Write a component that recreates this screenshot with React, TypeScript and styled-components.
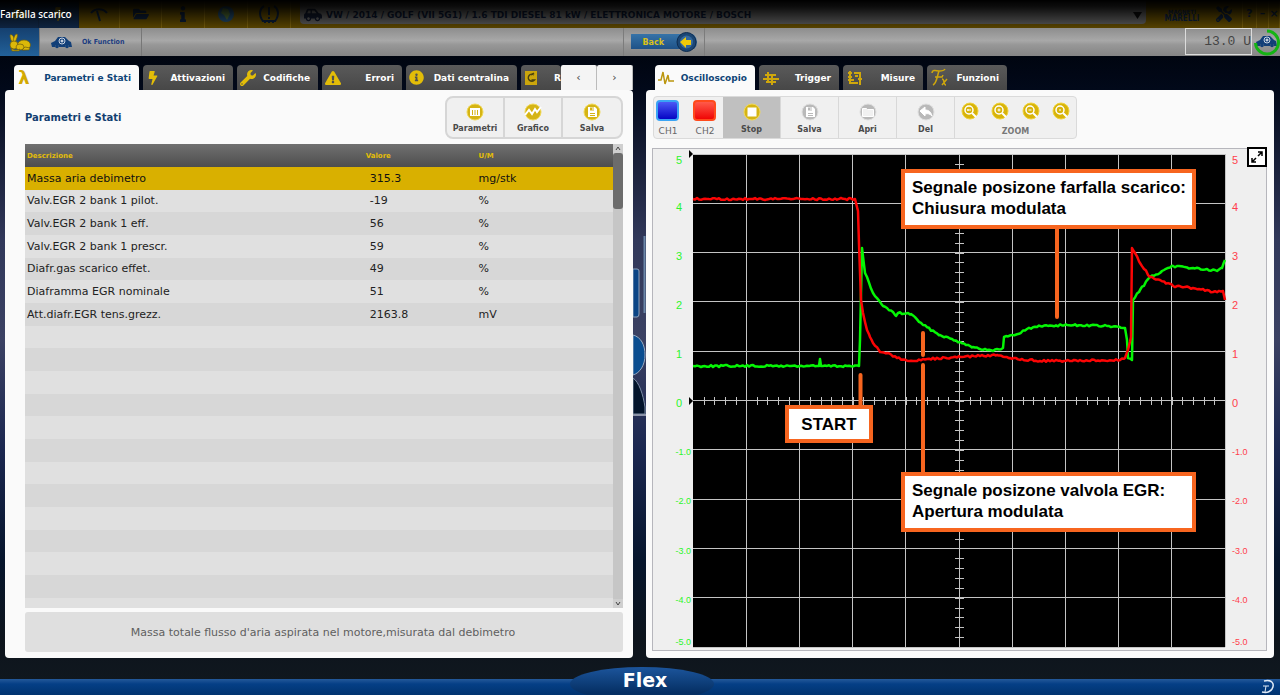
import React from "react";
import styled, { createGlobalStyle } from "styled-components";
import {
  FaBolt,
  FaWrench,
  FaExclamationTriangle,
  FaInfoCircle,
  FaFolderOpen,
  FaInfo,
  FaTools,
  FaCarSide,
} from "react-icons/fa";

const UI = '"DejaVu Sans", Verdana, sans-serif';
const UI_NARROW = '"DejaVu Sans Condensed", "DejaVu Sans", sans-serif';
const PLAIN = '"Liberation Sans", Arial, sans-serif';
const GOLD = "#e3bd08";
const NAVY = "#0f4577";

const GlobalStyle = createGlobalStyle`
  * { box-sizing: border-box; }
  body {
    margin: 0;
    font-family: ${UI};
    background: #020b1c;
  }
  button, select { font-family: inherit; margin: 0; }
  h1, h2, p { margin: 0; }
`;

const Page = styled.div`
  min-height: 100vh;
  display: flex;
  flex-direction: column;
  overflow: hidden;
  background: linear-gradient(180deg, #000510 56px, #02091a 90px, #31385a 240px, #3b4163 340px, #1b2750 450px, #06152c 560px, #0d141c 640px, #111920 100%);
`;

/* ---------- top bar ---------- */

const TopBar = styled.header`
  position: relative;
  display: flex;
  height: 28px;
  background: #8a6a00;
`;

const TopShade = styled.div`
  position: absolute;
  inset: 0;
  pointer-events: none;
  background: linear-gradient(180deg, #000 0, rgba(0, 0, 0, 0.9) 7px, rgba(0, 0, 0, 0.38) 100%);
`;

const WindowTitle = styled.h1`
  position: absolute;
  left: 0;
  top: 7px;
  font: 500 10px/14px "Noto Sans", sans-serif;
  color: #fff;
`;

const TopButton = styled.button<{ $width: number; $blue?: boolean }>`
  width: ${(p) => p.$width}px;
  flex: none;
  display: flex;
  align-items: center;
  justify-content: center;
  padding: 0;
  border: 0;
  border-right: 1px solid ${(p) => (p.$blue ? "#17335a" : "#b08a10")};
  background: ${(p) => (p.$blue ? "#173a68" : "transparent")};
  color: #10294d;
  font: 700 11px/14px ${UI};
`;

const Vehicle = styled.label`
  flex: 1;
  display: flex;
  align-items: center;
  gap: 4px;
  height: 24px;
  margin: 0 12px 0 9px;
  padding: 6px 4px 0 4px;
  border-radius: 0 0 4px 4px;
  background: #858585;
  color: #15203a;
`;

const VehicleSelect = styled.select`
  flex: 1;
  min-width: 0;
  height: 16px;
  padding: 0;
  border: 0;
  appearance: none;
  background: transparent;
  color: #0d1c3c;
  font-size: 9px;
  font-weight: 700;
`;

const Brand = styled.div`
  width: 48px;
  display: flex;
  flex-direction: column;
  align-items: center;
  justify-content: center;
  padding-top: 3px;
  color: #12305c;
  font: 700 8px/8px ${UI_NARROW};
`;

const BrandSmall = styled.span`
  font-size: 6px;
  line-height: 6px;
`;

/* ---------- function bar ---------- */

const FunctionBar = styled.nav`
  display: flex;
  height: 28px;
  background: linear-gradient(180deg, #8d8d8d, #a8a8a8 45%, #979797 60%, #858585);
`;

const RabbitButton = styled.button`
  width: 39px;
  padding: 4px 0 0;
  border: 0;
  background: linear-gradient(180deg, #15406f, #22619a);
`;

const OkFunction = styled.button`
  width: 103px;
  display: flex;
  align-items: center;
  gap: 10px;
  padding: 0 0 0 11px;
  border: 0;
  border-left: 1px solid #777;
  border-right: 1px solid #777;
  background: transparent;
  color: #1c3c80;
  font: 700 7px/12px ${UI_NARROW};
`;

const BarCenter = styled.div`
  flex: 1;
  display: flex;
  justify-content: center;
`;

const BackSlot = styled.div`
  width: 82px;
  padding: 4px 7px;
  border-left: 1px solid #7c7c7c;
  border-right: 1px solid #7c7c7c;
`;

const BackButton = styled.button`
  display: flex;
  align-items: center;
  justify-content: space-between;
  width: 66px;
  height: 20px;
  padding: 0 0 0 12px;
  border: 0;
  border-radius: 3px 10px 10px 3px;
  background: linear-gradient(180deg, transparent 2px, #3673a8 2px, #1f5288 17px, transparent 17px);
  color: #d9c119;
  font-size: 8px;
  font-weight: 700;
`;

const Lcd = styled.output`
  width: 67px;
  height: 27px;
  display: flex;
  align-items: center;
  justify-content: flex-end;
  border: 1px solid #dcdcdc;
  color: #444;
  font: 13px/20px "Liberation Mono", monospace;
  white-space: pre;
  overflow: hidden;
`;

const StatusSlot = styled.div`
  width: 28px;
  padding-left: 1px;
`;

/* ---------- panels and tabs ---------- */

const Main = styled.main`
  position: relative;
  flex: 1;
  display: grid;
  grid-template-columns: minmax(0, 1fr) minmax(0, 1fr);
  gap: 13px;
  padding: 9px 6px 21px 5px;
`;

const Column = styled.section`
  min-width: 0;
  display: flex;
  flex-direction: column;
`;

const TabRow = styled.div`
  display: flex;
  height: 25px;
  padding-left: 9px;
`;

const TabList = styled.div`
  flex: 1;
  min-width: 0;
  display: flex;
  gap: 4px;
  overflow: hidden;
`;

const Tab = styled.button<{ $width: number; $active?: boolean; $flush?: boolean }>`
  flex: none;
  width: ${(p) => p.$width}px;
  display: flex;
  align-items: center;
  justify-content: space-between;
  padding: 0 ${(p) => (p.$flush ? 0 : 8)}px 0 3px;
  border: 0;
  border-radius: 4px 4px 0 0;
  background: ${(p) => (p.$active ? "#fafafa" : "linear-gradient(180deg, #5a5a5a, #474747)")};
  color: ${(p) => (p.$active ? NAVY : "#fff")};
  font-size: 9px;
  font-weight: 700;
  white-space: nowrap;
  svg { flex: none; color: ${GOLD}; }
`;

const Lambda = styled.span`
  width: 14px;
  color: #d3a900;
  font: 700 18px/20px ${UI};
`;

const TabScroll = styled.button`
  width: 36px;
  padding: 0;
  border: 0;
  border-right: 1px solid #bbb;
  border-radius: 2px 2px 0 0;
  background: #f4f4f4;
  color: #444;
  font-size: 11px;
`;

const Panel = styled.div<{ $chart?: boolean }>`
  flex: 1;
  min-height: 568px;
  display: flex;
  flex-direction: column;
  padding: ${(p) => (p.$chart ? "6px 7px 7px 6px" : "6px 10px 6px 20px")};
  border-radius: 4px;
  background: #fafafa;
`;

/* ---------- left panel ---------- */

const PanelHead = styled.div`
  display: flex;
  justify-content: space-between;
  height: 48px;
`;

const PanelTitle = styled.h2`
  color: #123e70;
  font-size: 10px;
  line-height: 43px;
`;

const ButtonGroup = styled.div`
  display: flex;
  height: 43px;
  border: 2px solid #d6d6d6;
  border-radius: 8px;
  background: #f0f0f0;
  overflow: hidden;
`;

const ToolButton = styled.button<{ $active?: boolean; $faint?: boolean }>`
  width: 58px;
  display: flex;
  flex-direction: column;
  align-items: center;
  justify-content: center;
  gap: ${(p) => (p.$faint ? 4 : 3)}px;
  padding: 2px 0 0;
  border: 0;
  border-right: ${(p) => (p.$faint ? "1px solid #d8d8d8" : "2px solid #d6d6d6")};
  background: ${(p) => (p.$active ? "#c0c0c0" : "transparent")};
  color: #4a4a4a;
  font-size: 8px;
  line-height: 10px;
  font-weight: 700;
  &:last-child { border-right: 0; }
`;

const TableBox = styled.div`
  flex: 1 1 0;
  min-height: 0;
  display: flex;
  overflow: hidden;
`;

const TableClip = styled.div`
  flex: 1;
  min-height: 100%;
  overflow: hidden;
`;

const Table = styled.table`
  width: 100%;
  table-layout: fixed;
  border-collapse: collapse;
  color: #222;
  font-size: 11px;
  line-height: 14px;
  text-align: left;
  th, td { padding: 0 0 0 2px; font-weight: 400; }
`;

const HeadRow = styled.tr`
  height: 23px;
  background: linear-gradient(180deg, #707070, #4e4e4e);
  th {
    color: ${GOLD};
    font: 700 7px/12px ${UI};
  }
`;

const Row = styled.tr<{ $selected?: boolean }>`
  height: 23px;
  background: #d7d7d7;
  &:nth-child(3n + 2) { height: 22px; }
  &:nth-child(even) { background: #e0e0e0; }
  &:first-child { background: ${(p) => (p.$selected ? "#d9b000" : "#d7d7d7")}; color: #111; }
`;

const ValueCell = styled.td`
  && { padding-left: 6px; }
`;

const Scrollbar = styled.div`
  width: 10px;
  display: flex;
  flex-direction: column;
  align-items: center;
  background: #c6c6c6;
  color: #444;
`;

const ScrollStep = styled.button`
  width: 10px;
  height: 9px;
  padding: 0;
  border: 0;
  display: flex;
  background: #cfcfcf;
`;

const Thumb = styled.div`
  width: 10px;
  height: 56px;
  margin-bottom: auto;
  border-radius: 3px;
  background: #6c6c6c;
`;

const Description = styled.p`
  height: 40px;
  margin-top: 4px;
  padding-right: 2px;
  border-radius: 3px;
  background: #dfdfdf;
  color: #606060;
  font-size: 11px;
  line-height: 41px;
  text-align: center;
`;

/* ---------- oscilloscope ---------- */

const ScopeTools = styled.div`
  display: flex;
  align-self: flex-start;
  height: 43px;
  margin: 0 0 9px 1px;
  border: 1px solid #dadada;
  border-radius: 4px;
  background: #f0f0f0;
  overflow: hidden;
`;

const Channels = styled.div`
  display: flex;
  gap: 13px;
  width: 69px;
  padding-left: 2px;
`;

const Channel = styled.button`
  width: 24px;
  padding: 2px 0 0;
  border: 0;
  background: transparent;
  color: #666;
  font-size: 9px;
  line-height: 14px;
`;

const Led = styled.span<{ $glow: string; $from: string; $to: string }>`
  display: block;
  width: 23px;
  height: 21px;
  margin-bottom: 3px;
  border: 2px solid ${(p) => p.$glow};
  border-radius: 4px;
  background: linear-gradient(180deg, ${(p) => p.$from}, ${(p) => p.$to});
`;

const ZoomGroup = styled.div`
  width: 121px;
  padding-top: 5px;
  color: #777;
  font-size: 8px;
  line-height: 12px;
  font-weight: 700;
  text-align: center;
`;

const ZoomRow = styled.div`
  display: flex;
  justify-content: space-between;
  margin: 0 6px 4px;
`;

const ZoomButton = styled.button`
  width: 18px;
  height: 20px;
  padding: 0;
  border: 0;
  background: transparent;
`;

const ScopeFrame = styled.div`
  position: relative;
  flex: 1;
  display: flex;
  padding: 5px 0 3px;
  border: 1px solid #b6b6bc;
  background: #efefef;
`;

const Axis = styled.div<{ $right?: boolean }>`
  width: ${(p) => (p.$right ? 41 : 40)}px;
  display: flex;
  flex-direction: column;
  padding: ${(p) => (p.$right ? "0 0 0 7px" : "0 2px 0 0")};
  color: ${(p) => (p.$right ? "#ff3e4c" : "#2cf52c")};
  font-family: ${PLAIN};
`;

const AxisLabel = styled.span<{ $small?: boolean; $left?: boolean }>`
  flex: 1;
  display: flex;
  align-items: center;
  justify-content: ${(p) => (p.$left ? "flex-end" : "flex-start")};
  padding-right: ${(p) => (p.$left && !p.$small ? 9 : 0)}px;
  font-size: ${(p) => (p.$small ? 9 : 11)}px;
  line-height: ${(p) => (p.$small ? 9 : 12)}px;
  &:first-child { flex: none; height: 28px; align-items: flex-start; }
  &:last-child { flex: none; height: 22px; align-items: flex-end; }
`;

const Plot = styled.div`
  position: relative;
  flex: 1;
  min-width: 0;
  background: #000;
`;

const PlotSvg = styled.svg`
  position: absolute;
  inset: 0;
  width: 100%;
  height: 100%;
  overflow: visible;
`;

const Callout = styled.div<{ $left: number; $top: number; $small?: boolean }>`
  position: absolute;
  left: ${(p) => p.$left}%;
  top: ${(p) => p.$top}%;
  width: ${(p) => (p.$small ? 88 : 295)}px;
  height: ${(p) => (p.$small ? 38 : 60)}px;
  padding: ${(p) => (p.$small ? "5px 0" : "4px 7px")};
  border: 4px solid #f7651f;
  background: #fff;
  color: #000;
  font: 700 17px/21px ${PLAIN};
  text-align: ${(p) => (p.$small ? "center" : "left")};
  white-space: nowrap;
`;

const ExpandButton = styled.button`
  position: absolute;
  top: -2px;
  right: -1px;
  width: 20px;
  height: 20px;
  padding: 0;
  display: flex;
  border: 2px solid #000;
  background: #fff;
`;

const Gutter = styled.svg`
  position: absolute;
  left: calc(50% - 7px);
  top: 175px;
`;

/* ---------- footer ---------- */

const Footer = styled.footer`
  position: relative;
  height: 16px;
  display: flex;
  justify-content: flex-end;
  padding-right: 5px;
  background: linear-gradient(180deg, #24599a, #053f86 5px, #00336f);
`;

const FooterClip = styled.div`
  position: absolute;
  left: calc(50% - 70px);
  bottom: 0;
  width: 144px;
  height: 28px;
  overflow: hidden;
`;

const FooterBadge = styled.div`
  height: 34px;
  padding-left: 6px;
  border-radius: 50%;
  background: linear-gradient(180deg, #1c559c, #052f63 26px);
  color: #fff;
  font-size: 19px;
  line-height: 26px;
  font-weight: 700;
  text-align: center;
`;

/* ---------- icons ---------- */

type Glyph = "params" | "graph" | "save" | "stop" | "open" | "undo";

function RoundIcon({ glyph, grey }: { glyph: Glyph; grey?: boolean }) {
  const main = grey ? "#b9b9b9" : "#d5b414";
  const light = grey ? "#dedede" : "#f0d858";
  return (
    <svg width="18" height="18" viewBox="0 0 18 18" fill="none" stroke="#fff">
      <circle cx="9" cy="9" r="8" fill={main} stroke={light} />
      {glyph === "params" && (
        <g>
          <path d="M4 5h10v8H4z" fill="#fff" stroke="none" />
          <path d="M6.500 7v5M9 7v5M11.500 7v5" stroke={main} />
        </g>
      )}
      {glyph === "graph" && <path d="M1 12l4-5 3 4 3-5 2 3 4-5" strokeWidth="2" />}
      {glyph === "save" && (
        <g stroke="none">
          <path d="M5 4h7l2 2v8H5z" fill="#fff" />
          <path d="M7 4.500h4v3H7zM7 10h5v1H7zM7 12h5v1H7z" fill={main} />
          <path d="M9.500 5h1v2h-1z" fill="#fff" />
        </g>
      )}
      {glyph === "stop" && <rect x="5" y="5" width="8" height="8" fill="#fff" />}
      {glyph === "open" && <path d="M3.500 5.500h4l1 1h6v7h-11z" fill={grey ? "#f1f1f1" : "#fff"} />}
      {glyph === "undo" && <path d="M3 8l5-4v3c4 0 6 2 7 6-2-2-4-3-7-2v2z" fill="#fff" />}
    </svg>
  );
}

function ZoomIcon({ inner }: { inner: string }) {
  return (
    <svg width="18" height="18" viewBox="0 0 18 18" fill="none">
      <circle cx="9" cy="9" r="8" fill="#d8b40a" stroke="#efd23c" />
      <circle cx="8" cy="8" r="4" stroke="#fff" strokeWidth="1.500" />
      <path d="M11 11l4 4" stroke="#fff" strokeWidth="2" />
      <path d={inner} stroke="#fff" />
    </svg>
  );
}

function Rabbit() {
  return (
    <svg width="24" height="20" viewBox="0 0 24 20">
      <g fill="#dcb809" stroke="#6d5b10" strokeWidth=".7">
        <path d="M2 2c1-1 3 0 4 3l1 4-2 1C3 8 2 5 2 2z" />
        <path d="M9 1c1 1 0 5-2 8L5 8c1-4 2-7 4-7z" />
        <ellipse cx="16" cy="12" rx="6.500" ry="5" />
        <circle cx="6" cy="12" r="4" />
        <ellipse cx="12" cy="14" rx="4" ry="3" />
        <path d="M3 15c3 3 7 2 9 1l-1 2H4zM14 17h7l1-2-5-1z" />
      </g>
    </svg>
  );
}

function CarIcon() {
  return (
    <svg width="21" height="13" viewBox="0 0 21 13">
      <path d="M0 7l4-2 3-4h7l4 4 2 1 1 5h-3a2 2 0 0 0-4 0H8a2 2 0 0 0-4 0H1z" fill="#123f78" />
      <circle cx="6" cy="10.500" r="1.800" fill="#123f78" />
      <circle cx="16" cy="10.500" r="1.800" fill="#123f78" />
      <circle cx="11" cy="5" r="3" fill="#123f78" stroke="#c8d2e0" />
      <path d="M9.500 5h3M11 3.500v3" stroke="#fff" />
    </svg>
  );
}

function DocIcon() {
  return (
    <svg width="14" height="16" viewBox="0 0 14 16">
      <rect x="1" y="1" width="12" height="14" fill="#cba60c" />
      <path d="M10 5A3.500 3.500 0 1 0 10.500 10H7.500M7 5l3-2" fill="none" stroke="#4a4210" strokeWidth="1.500" />
    </svg>
  );
}

const scopeIcon = (d: string) => (
  <svg width="18" height="18" viewBox="0 0 18 18" fill="none" stroke="#cfa70c" strokeWidth="2">
    <path d={d} />
  </svg>
);

/* ---------- data ---------- */

const parameters = [
  ["Massa aria debimetro", "315.3", "mg/stk"],
  ["Valv.EGR 2 bank 1 pilot.", "-19", "%"],
  ["Valv.EGR 2 bank 1 eff.", "56", "%"],
  ["Valv.EGR 2 bank 1 prescr.", "59", "%"],
  ["Diafr.gas scarico effet.", "49", "%"],
  ["Diaframma EGR nominale", "51", "%"],
  ["Att.diafr.EGR tens.grezz.", "2163.8", "mV"],
];
const blankRows = Array.from({ length: 13 }, (_, i) => i);
const axisValues = ["5", "4", "3", "2", "1", "0", "-1.0", "-2.0", "-3.0", "-4.0", "-5.0"];

const PLOT_W = 532;
const PLOT_H = 493;

const redTrace: [number, number][] = [
  [0, 45], [162, 45], [165, 57], [166, 90], [168, 146], [170, 159], [174, 176], [177, 183], [180, 189],
  [187, 198], [194, 199], [204, 204], [220, 207], [234, 205], [267, 203], [304, 201], [317, 204],
  [347, 207], [427, 206], [432, 204], [435, 196], [438, 183], [439, 94], [442, 99], [447, 109], [457, 123],
  [467, 126], [480, 132], [500, 134], [520, 138], [530, 137], [532, 146],
];
const greenTrace: [number, number][] = [
  [0, 212], [126, 212], [127, 205], [128, 212], [166, 212], [167, 186], [169, 94], [172, 119], [180, 139],
  [190, 152], [200, 158], [203, 162], [205, 159], [218, 160], [230, 171], [247, 181], [267, 188],
  [280, 193], [294, 196], [300, 197], [310, 194], [311, 183], [322, 181], [334, 175], [347, 172],
  [374, 171], [414, 172], [432, 174], [434, 186], [435, 204], [439, 206], [440, 146], [447, 136],
  [457, 123], [467, 119], [480, 112], [500, 114], [524, 117], [529, 114], [532, 106],
];

/* Interpolates the samples every 2px and adds a small repeatable ripple. */
function noisy(points: [number, number][], seed: number) {
  let s = seed;
  const out: string[] = [];
  points.forEach(([x, y], i) => {
    out.push(`${x},${y}`);
    const next = points[i + 1];
    if (!next) return;
    for (let px = x + 2; px < next[0]; px += 2) {
      s = (s * 1103515245 + 12345) % 2147483648;
      const n = (s / 2147483648 - 0.5) * 2;
      const py = y + ((next[1] - y) * (px - x)) / (next[0] - x) + n;
      out.push(`${px},${py.toFixed(1)}`);
    }
  });
  return out.join(" ");
}

function ScopePlot() {
  const ten = Array.from({ length: 11 }, (_, i) => i);
  const fifty = Array.from({ length: 49 }, (_, i) => i + 1);
  return (
    <PlotSvg viewBox={`0 0 ${PLOT_W} ${PLOT_H}`} preserveAspectRatio="none" role="img" aria-label="Oscilloscopio">
      <g stroke="#c4c4c4" strokeWidth="1">
        {ten.map((i) => {
          const x = Math.floor((i * PLOT_W) / 10) + 0.5;
          const y = Math.floor((i * PLOT_H) / 10) + 0.5;
          return (
            <g key={i}>
              {i > 0 && <path d={`M${x} 0V${PLOT_H}`} />}
              <path d={`M0 ${y}H${PLOT_W}`} />
            </g>
          );
        })}
        {fifty.map((i) => {
          const x = Math.round((i * PLOT_W) / 50) + 0.5;
          const y = Math.round((i * PLOT_H) / 50) + 0.5;
          return <path key={i} d={`M${x} 243v8M262 ${y}h9`} />;
        })}
      </g>
      <path d="M-4 -4l4 4-4 4zM-4 243l4 4-4 4z" fill="#000" />
      <g fill="none" strokeWidth="2.500" strokeLinejoin="round">
        <polyline points={noisy(greenTrace, 7)} stroke="#05f505" />
        <polyline points={noisy(redTrace, 91)} stroke="#fb0505" />
      </g>
      <path d="M364 74V163M230 179V201M230 211V320M167.500 221V255" stroke="#f7651f" strokeWidth="4" strokeLinecap="round" />
    </PlotSvg>
  );
}

export default function App() {
  return (
    <Page>
      <GlobalStyle />
      <TopBar>
        <TopButton $width={39} $blue aria-label="Home"><FaCarSide size={14} color="#a98a10" /></TopButton>
        <TopButton $width={40} $blue aria-label="Diagnosi"><FaBolt size={14} color="#a98a10" /></TopButton>
        <TopButton $width={41} aria-label="Misure">
          <svg width="20" height="20" viewBox="0 0 20 20" fill="none" stroke="#10294d" strokeWidth="2">
            <path d="M2 9c4-5 12-5 16 0M8 7l3 10" />
          </svg>
        </TopButton>
        <TopButton $width={42} aria-label="Archivio"><FaFolderOpen size={16} /></TopButton>
        <TopButton $width={43} aria-label="Informazioni"><FaInfo size={16} /></TopButton>
        <TopButton $width={43} aria-label="Rete">
          <svg width="20" height="20" viewBox="0 0 20 20">
            <circle cx="10" cy="10" r="8" fill="#2f6a9a" />
            <path d="M7 4l5 1 2 5-3 6-3-5-3-2z" fill="#6f9a4a" />
          </svg>
        </TopButton>
        <TopButton $width={43} aria-label="Pressione pneumatici">
          <svg width="22" height="22" viewBox="0 0 22 22" fill="none" stroke="#10294d" strokeWidth="2">
            <path d="M5 18C0 12 2 5 6 3M17 18c5-6 3-13-1-15M4 18h14M11 4v8M11 14v2M7 18v2M11 18v2M15 18v2" />
          </svg>
        </TopButton>
        <Vehicle>
          <FaCarSide size={18} />
          <VehicleSelect aria-label="Veicolo">
            <option>VW / 2014 / GOLF (VII 5G1) / 1.6 TDI DIESEL 81 kW / ELETTRONICA MOTORE / BOSCH</option>
          </VehicleSelect>
          <svg width="9" height="7" viewBox="0 0 9 7"><path d="M0 0h9L4.500 7z" fill="#111" /></svg>
        </Vehicle>
        <Brand>
          <BrandSmall>MAGNETI</BrandSmall>
          <span>MARELLI</span>
        </Brand>
        <TopButton $width={37} aria-label="Impostazioni"><FaTools size={16} /></TopButton>
        <TopButton $width={14} aria-label="Aiuto">?</TopButton>
        <TopButton $width={12} aria-label="Riduci">–</TopButton>
        <TopButton $width={11} aria-label="Chiudi">×</TopButton>
        <TopShade />
        <WindowTitle>Farfalla scarico</WindowTitle>
      </TopBar>

      <FunctionBar>
        <RabbitButton aria-label="Modo rapido"><Rabbit /></RabbitButton>
        <OkFunction><CarIcon />Ok Function</OkFunction>
        <BarCenter>
          <BackSlot>
            <BackButton>
              Back
              <svg width="21" height="20" viewBox="0 0 21 20">
                <circle cx="10.500" cy="10" r="9.500" fill="#1b4674" stroke="#0e2c50" />
                <circle cx="10.500" cy="10" r="6.500" fill="#35699c" />
                <path d="M4 10l6-5v3h5v5h-5v3z" fill="#f0ca0a" />
              </svg>
            </BackButton>
          </BackSlot>
        </BarCenter>
        <Lcd>13.0 U</Lcd>
        <StatusSlot>
          <svg width="27" height="28" viewBox="0 0 27 28">
            <g transform="translate(3 7)"><CarIcon /></g>
            <path d="M14 3a11.500 11.500 0 1 1-11.500 12" fill="none" stroke="#14b414" strokeWidth="3" />
          </svg>
        </StatusSlot>
      </FunctionBar>

      <Main>
        <Column>
          <TabRow>
            <TabList role="tablist">
              <Tab $width={125} $active role="tab" aria-selected="true"><Lambda>λ</Lambda>Parametri e Stati</Tab>
              <Tab $width={90} role="tab"><FaBolt size={14} />Attivazioni</Tab>
              <Tab $width={81} role="tab"><FaWrench size={16} />Codifiche</Tab>
              <Tab $width={80} role="tab"><FaExclamationTriangle size={16} />Errori</Tab>
              <Tab $width={111} role="tab"><FaInfoCircle size={15} />Dati centralina</Tab>
              <Tab $width={40} $flush role="tab"><DocIcon />R</Tab>
            </TabList>
            <TabScroll aria-label="Schede precedenti">‹</TabScroll>
            <TabScroll aria-label="Schede successive">›</TabScroll>
          </TabRow>
          <Panel>
            <PanelHead>
              <PanelTitle>Parametri e Stati</PanelTitle>
              <ButtonGroup>
                <ToolButton><RoundIcon glyph="params" />Parametri</ToolButton>
                <ToolButton><RoundIcon glyph="graph" />Grafico</ToolButton>
                <ToolButton><RoundIcon glyph="save" />Salva</ToolButton>
              </ButtonGroup>
            </PanelHead>
            <TableBox>
              <TableClip>
                <Table>
                  <colgroup>
                    <col style={{ width: "57.6%" }} />
                    <col style={{ width: "19.2%" }} />
                    <col />
                  </colgroup>
                  <thead>
                    <HeadRow><th>Descrizione</th><th>Valore</th><th>U/M</th></HeadRow>
                  </thead>
                  <tbody>
                    {parameters.map(([name, value, unit], i) => (
                      <Row key={name} $selected={i === 0}>
                        <td>{name}</td>
                        <ValueCell>{value}</ValueCell>
                        <td>{unit}</td>
                      </Row>
                    ))}
                    {blankRows.map((i) => (
                      <Row key={i}><td /><td /><td /></Row>
                    ))}
                  </tbody>
                </Table>
              </TableClip>
              <Scrollbar>
                <ScrollStep aria-label="Su">
                  <svg width="10" height="9" viewBox="0 0 10 9"><path d="M3 6l2-3 2 3" fill="none" stroke="#444" /></svg>
                </ScrollStep>
                <Thumb />
                <ScrollStep aria-label="Giù">
                  <svg width="10" height="9" viewBox="0 0 10 9"><path d="M3 3l2 3 2-3" fill="none" stroke="#444" /></svg>
                </ScrollStep>
              </Scrollbar>
            </TableBox>
            <Description>Massa totale flusso d'aria aspirata nel motore,misurata dal debimetro</Description>
          </Panel>
        </Column>

        <Column>
          <TabRow>
            <TabList role="tablist">
              <Tab $width={100} $active role="tab" aria-selected="true">
                <svg width="16" height="16" viewBox="0 0 16 16" fill="none" stroke="#bb960f" strokeWidth="1.500">
                  <path d="M0 10h3l2-8 2 12 3-9 1 6h5" />
                </svg>
                Oscilloscopio
              </Tab>
              <Tab $width={80} role="tab">{scopeIcon("M3 6h11M1 10h16M4 13h10M6 3v10M10 5v11")}Trigger</Tab>
              <Tab $width={80} role="tab">{scopeIcon("M4 2v12h8M2 4h4M8 4h6v12M2 8h4M2 11h6M9 7h3M12 10h4")}Misure</Tab>
              <Tab $width={80} role="tab">
                <svg width="20" height="19" viewBox="0 0 20 19" fill="none" stroke="#cfa70c" strokeWidth="1.500">
                  <path d="M2 5c0-3 3-3 7-2 3 0 5 0 6-2M9 3c-2 5-2 12-6 14M5 9h7l1-2M12 11c3 0 1 6 4 6M17 11l-5 6" />
                </svg>
                Funzioni
              </Tab>
            </TabList>
          </TabRow>
          <Panel $chart>
            <ScopeTools>
              <Channels>
                <Channel><Led $glow="#3aa4f5" $from="#4b58f5" $to="#0505c4" />CH1</Channel>
                <Channel><Led $glow="#ff4a1c" $from="#ff5a4a" $to="#f00505" />CH2</Channel>
              </Channels>
              <ToolButton $faint $active><RoundIcon glyph="stop" />Stop</ToolButton>
              <ToolButton $faint><RoundIcon glyph="save" grey />Salva</ToolButton>
              <ToolButton $faint><RoundIcon glyph="open" grey />Apri</ToolButton>
              <ToolButton $faint><RoundIcon glyph="undo" grey />Del</ToolButton>
              <ZoomGroup>
                <ZoomRow>
                  <ZoomButton aria-label="Zoom adatta"><ZoomIcon inner="M6 8h4M7 7v2" /></ZoomButton>
                  <ZoomButton aria-label="Zoom avanti"><ZoomIcon inner="M6.500 8h3M8 6.500v3" /></ZoomButton>
                  <ZoomButton aria-label="Zoom indietro"><ZoomIcon inner="M6.500 8h3" /></ZoomButton>
                  <ZoomButton aria-label="Zoom area"><ZoomIcon inner="M8 7v2" /></ZoomButton>
                </ZoomRow>
                ZOOM
              </ZoomGroup>
            </ScopeTools>
            <ScopeFrame>
              <Axis>
                {axisValues.map((v, i) => <AxisLabel key={v} $left $small={i > 5}>{v}</AxisLabel>)}
              </Axis>
              <Plot>
                <ScopePlot />
                <Callout $left={39.1} $top={3}>Segnale posizone farfalla scarico:<br />Chiusura modulata</Callout>
                <Callout $left={17.3} $top={51} $small>START</Callout>
                <Callout $left={39.1} $top={64.5}>Segnale posizone valvola EGR:<br />Apertura modulata</Callout>
              </Plot>
              <Axis $right>
                {axisValues.map((v, i) => <AxisLabel key={v} $small={i > 5}>{v}</AxisLabel>)}
              </Axis>
              <ExpandButton aria-label="Schermo intero">
                <svg width="16" height="16" viewBox="0 0 16 16" fill="none" stroke="#000" strokeWidth="1.500">
                  <path d="M9 3h4v4M13 3L9 7M3 9v4h4M3 13l4-4" />
                </svg>
              </ExpandButton>
            </ScopeFrame>
          </Panel>
        </Column>
        <Gutter width="13" height="190" viewBox="0 0 13 190">
          <path d="M11.500 5V82" stroke="#6b87a8" strokeWidth="2" />
          <path d="M0 38h4q2 0 2 2v43q0 3-2 3H0z" fill="#0a4485" stroke="#8ea2bb" />
          <path d="M0 104c8 2 12 10 12 20s-5 18-12 20z" fill="#0a4d90" stroke="#9aaac0" />
          <path d="M0 147c6 4 10 16 12 29v7H0z" fill="#03142b" stroke="#7d8ea6" />
          <path d="M0 184h13" stroke="#8b93a8" strokeWidth="2" />
        </Gutter>
      </Main>

      <Footer>
        <FooterClip><FooterBadge>Flex</FooterBadge></FooterClip>
        <svg width="15" height="15" viewBox="0 0 15 15" fill="none" stroke="#dfe9f5">
          <path d="M4 2c8-2 11 3 8 8-2 3-6 4-10 3" strokeWidth="1.500" />
          <path d="M3 7h6M6 7l-1 6" />
        </svg>
      </Footer>
    </Page>
  );
}
